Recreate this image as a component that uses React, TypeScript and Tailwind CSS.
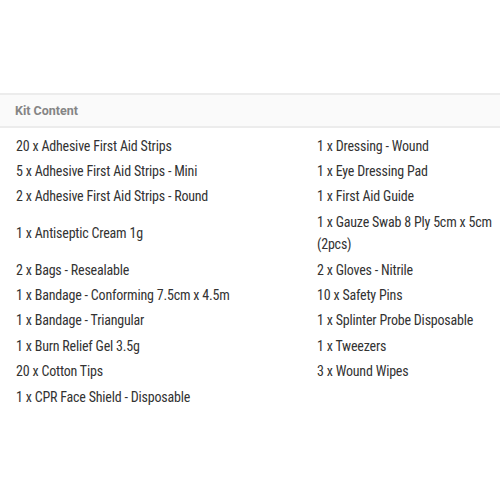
import React from 'react';

const rows: [string, string][] = [
  ['20 x Adhesive First Aid Strips', '1 x Dressing - Wound'],
  ['5 x Adhesive First Aid Strips - Mini', '1 x Eye Dressing Pad'],
  ['2 x Adhesive First Aid Strips - Round', '1 x First Aid Guide'],
  ['1 x Antiseptic Cream 1g', '1 x Gauze Swab 8 Ply 5cm x 5cm (2pcs)'],
  ['2 x Bags - Resealable', '2 x Gloves - Nitrile'],
  ['1 x Bandage - Conforming 7.5cm x 4.5m', '10 x Safety Pins'],
  ['1 x Bandage - Triangular', '1 x Splinter Probe Disposable'],
  ['1 x Burn Relief Gel 3.5g', '1 x Tweezers'],
  ['20 x Cotton Tips', '3 x Wound Wipes'],
  ['1 x CPR Face Shield - Disposable', ''],
];

export default function App() {
  return (
    <div className="w-[500px] h-[500px] bg-white pt-[93px]">
      <div className="border-y-2 border-[#ececec] bg-[#fafafa] h-[35px] flex items-center pl-[15px] pt-[2px]">
        <span className="font-['Roboto','Liberation_Sans',sans-serif] font-bold text-[12.5px] text-[#858585]">
          Kit Content
        </span>
      </div>
      <div
        className="grid grid-cols-[301px_1fr] items-center mt-[5px] text-[14px] leading-[22.4px] tracking-[-0.2px] text-[#333333] font-['Roboto_Condensed','Liberation_Sans_Narrow','Arial_Narrow','Roboto',sans-serif] [font-stretch:condensed]"
      >
        {rows.map(([a, b], i) => (
          <React.Fragment key={i}>
            <div className="pl-4 py-[1.5px]">{a}</div>
            <div className="pl-4 py-[1.5px]">{b}</div>
          </React.Fragment>
        ))}
      </div>
    </div>
  );
}
